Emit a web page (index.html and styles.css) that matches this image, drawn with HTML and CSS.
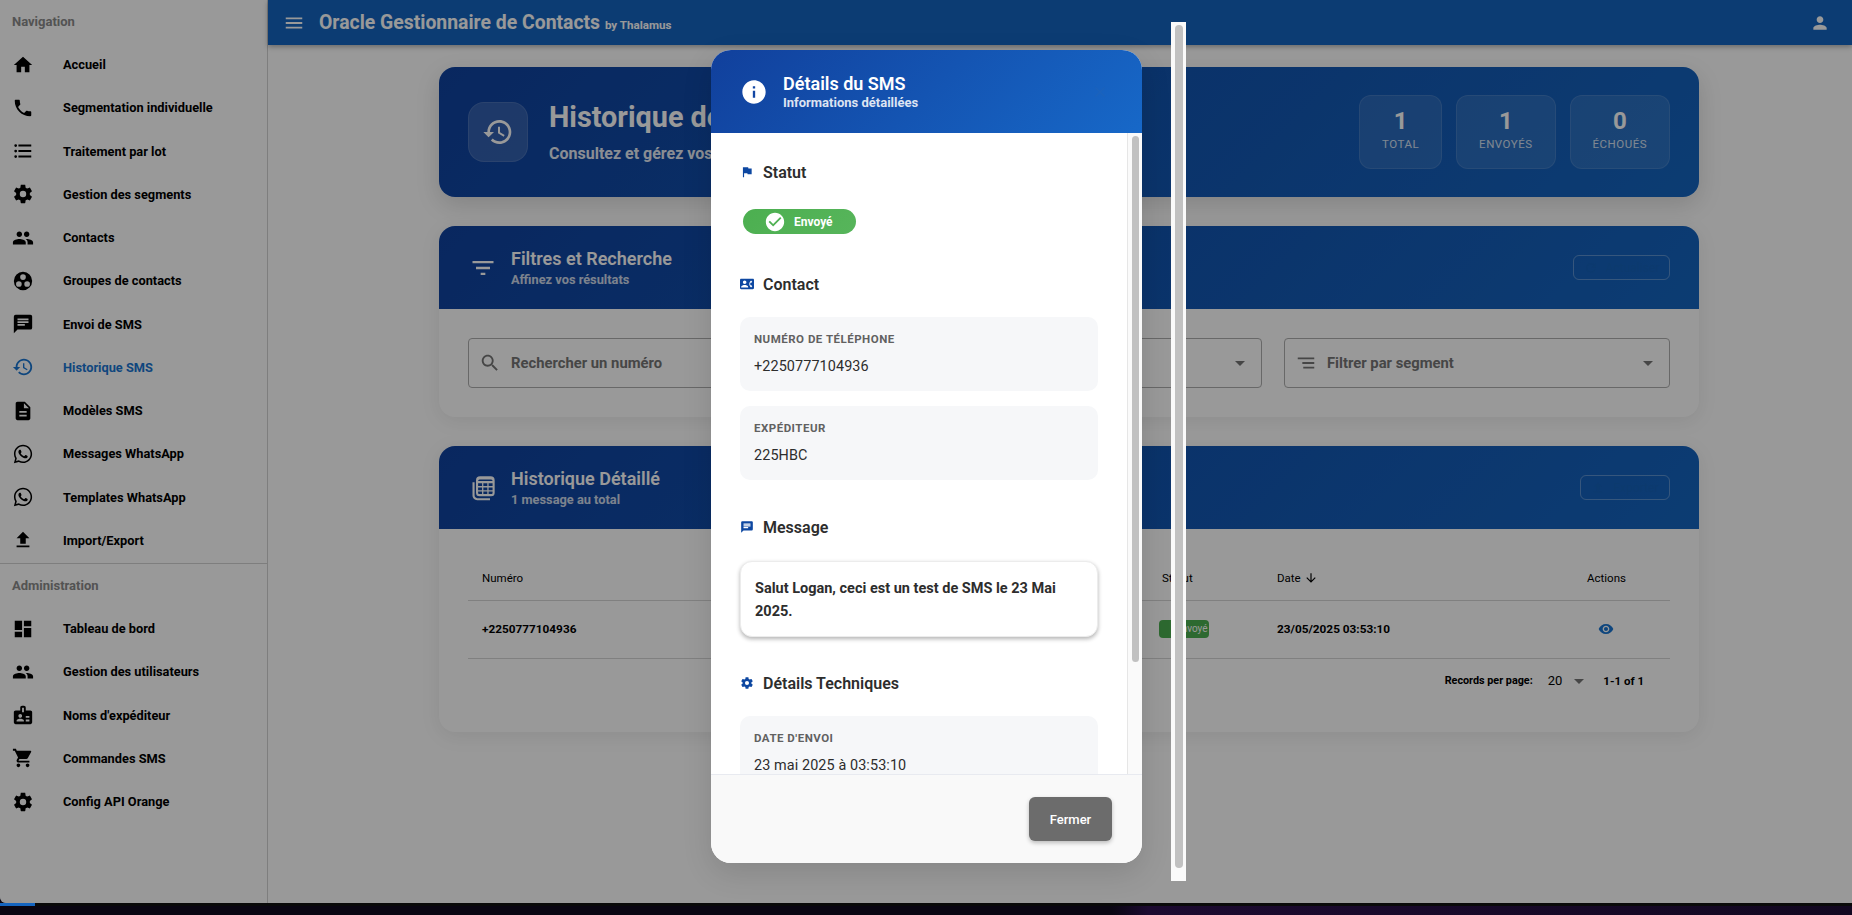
FILE: index.html
```html
<!DOCTYPE html>
<html lang="fr">
    <head>
        <meta charset="UTF-8">
        <meta name="viewport" content="width=device-width, initial-scale=1.0">
        <title>Historique SMS</title>
        <link rel="stylesheet" href="styles.css">
    </head>

    <body>
        <!-- Icon set, used with <use> everywhere below -->
        <svg class="icon-defs" xmlns="http://www.w3.org/2000/svg">
            <symbol id="i-home" viewBox="0 0 24 24"><path d="M10 20v-6h4v6h5v-8h3L12 3 2 12h3v8z"/></symbol>
            <symbol id="i-phone" viewBox="0 0 24 24"><path d="M6.62 10.79c1.44 2.83 3.76 5.14 6.59 6.59l2.2-2.2c.27-.27.67-.36 1.02-.24 1.12.37 2.33.57 3.57.57.55 0 1 .45 1 1V20c0 .55-.45 1-1 1-9.39 0-17-7.61-17-17 0-.55.45-1 1-1h3.5c.55 0 1 .45 1 1 0 1.25.2 2.45.57 3.57.11.35.03.74-.25 1.02l-2.2 2.2z"/></symbol>
            <symbol id="i-list" viewBox="0 0 24 24"><path d="M7,5H21V7H7V5M7,13V11H21V13H7M4,4.5A1.5,1.5 0 0,1 5.5,6A1.5,1.5 0 0,1 4,7.5A1.5,1.5 0 0,1 2.5,6A1.5,1.5 0 0,1 4,4.5M4,10.5A1.5,1.5 0 0,1 5.5,12A1.5,1.5 0 0,1 4,13.5A1.5,1.5 0 0,1 2.5,12A1.5,1.5 0 0,1 4,10.5M7,19V17H21V19H7M4,16.5A1.5,1.5 0 0,1 5.5,18A1.5,1.5 0 0,1 4,19.5A1.5,1.5 0 0,1 2.5,18A1.5,1.5 0 0,1 4,16.5Z"/></symbol>
            <symbol id="i-cog" viewBox="0 0 24 24"><path d="M12,15.5A3.5,3.5 0 0,1 8.5,12A3.5,3.5 0 0,1 12,8.5A3.5,3.5 0 0,1 15.5,12A3.5,3.5 0 0,1 12,15.5M19.43,12.97C19.47,12.65 19.5,12.33 19.5,12C19.5,11.67 19.47,11.34 19.43,11L21.54,9.37C21.73,9.22 21.78,8.95 21.66,8.73L19.66,5.27C19.54,5.05 19.27,4.96 19.05,5.05L16.56,6.05C16.04,5.66 15.5,5.32 14.87,5.07L14.5,2.42C14.46,2.18 14.25,2 14,2H10C9.75,2 9.54,2.18 9.5,2.42L9.13,5.07C8.5,5.32 7.96,5.66 7.44,6.05L4.95,5.05C4.73,4.96 4.46,5.05 4.34,5.27L2.34,8.73C2.21,8.95 2.27,9.22 2.46,9.37L4.57,11C4.53,11.34 4.5,11.67 4.5,12C4.5,12.33 4.53,12.65 4.57,12.97L2.46,14.63C2.27,14.78 2.21,15.05 2.34,15.27L4.34,18.73C4.46,18.95 4.73,19.03 4.95,18.95L7.44,17.94C7.96,18.34 8.5,18.68 9.13,18.93L9.5,21.58C9.54,21.82 9.75,22 10,22H14C14.25,22 14.46,21.82 14.5,21.58L14.87,18.93C15.5,18.67 16.04,18.34 16.56,17.94L19.05,18.95C19.27,19.03 19.54,18.95 19.66,18.73L21.66,15.27C21.78,15.05 21.73,14.78 21.54,14.63L19.43,12.97Z"/></symbol>
            <symbol id="i-people" viewBox="0 0 24 24"><path d="M16 11c1.66 0 2.99-1.34 2.99-3S17.66 5 16 5c-1.66 0-3 1.34-3 3s1.34 3 3 3zm-8 0c1.66 0 2.99-1.34 2.99-3S9.66 5 8 5C6.34 5 5 6.34 5 8s1.34 3 3 3zm0 2c-2.33 0-7 1.17-7 3.5V19h14v-2.5c0-2.33-4.67-3.5-7-3.5zm8 0c-.29 0-.62.02-.97.05 1.16.84 1.97 1.97 1.97 3.45V19h6v-2.5c0-2.33-4.67-3.5-7-3.5z"/></symbol>
            <symbol id="i-groups" viewBox="0 0 24 24"><path fill-rule="evenodd" d="M12 2a10 10 0 1 0 0 20 10 10 0 0 0 0-20zM12 4.6a3.1 3.1 0 1 1 0 6.2 3.1 3.1 0 0 1 0-6.2zM7.5 12.2a3.1 3.1 0 1 1 0 6.2 3.1 3.1 0 0 1 0-6.2zM16.5 12.2a3.1 3.1 0 1 1 0 6.2 3.1 3.1 0 0 1 0-6.2z"/></symbol>
            <symbol id="i-chat" viewBox="0 0 24 24"><path d="M20,2H4A2,2 0 0,0 2,4V22L6,18H20A2,2 0 0,0 22,16V4C22,2.89 21.1,2 20,2M6,9H18V11H6M14,14H6V12H14M18,8H6V6H18"/></symbol>
            <symbol id="i-history" viewBox="0 0 24 24"><path d="M13 3c-4.97 0-9 4.03-9 9H1l3.89 3.89.07.14L9 12H6c0-3.87 3.13-7 7-7s7 3.13 7 7-3.13 7-7 7c-1.93 0-3.68-.79-4.94-2.06l-1.42 1.42C8.27 19.99 10.51 21 13 21c4.97 0 9-4.03 9-9s-4.03-9-9-9zm-1 5v5l4.28 2.54.72-1.21-3.5-2.08V8H12z"/></symbol>
            <symbol id="i-doc" viewBox="0 0 24 24"><path d="M14 2H6c-1.1 0-1.99.9-1.99 2L4 20c0 1.1.89 2 1.99 2H18c1.1 0 2-.9 2-2V8l-6-6zm2 16H8v-2h8v2zm0-4H8v-2h8v2zm-3-5V3.5L18.5 9H13z"/></symbol>
            <symbol id="i-whatsapp" viewBox="0 0 24 24"><path d="M12.04 2C6.58 2 2.13 6.45 2.13 11.91C2.13 13.66 2.59 15.36 3.45 16.86L2.05 22L7.3 20.62C8.75 21.41 10.38 21.83 12.04 21.83C17.5 21.83 21.95 17.38 21.95 11.92C21.95 9.27 20.92 6.78 19.05 4.91C17.18 3.03 14.69 2 12.04 2M12.05 3.67C14.25 3.67 16.31 4.53 17.87 6.09C19.42 7.65 20.28 9.72 20.28 11.92C20.28 16.46 16.58 20.15 12.04 20.15C10.56 20.15 9.11 19.76 7.85 19L7.55 18.83L4.43 19.65L5.26 16.61L5.06 16.29C4.24 15 3.8 13.47 3.8 11.91C3.81 7.37 7.5 3.67 12.05 3.67M8.53 7.33C8.37 7.33 8.1 7.39 7.87 7.64C7.65 7.89 7 8.5 7 9.71C7 10.93 7.89 12.1 8 12.27C8.14 12.44 9.76 14.94 12.25 16C12.84 16.27 13.3 16.42 13.66 16.53C14.25 16.72 14.79 16.69 15.22 16.63C15.7 16.56 16.68 16.03 16.89 15.45C17.1 14.87 17.1 14.38 17.04 14.27C16.97 14.17 16.81 14.11 16.56 14C16.31 13.86 15.09 13.26 14.87 13.18C14.64 13.1 14.5 13.06 14.31 13.3C14.15 13.55 13.67 14.11 13.53 14.27C13.38 14.44 13.24 14.46 13 14.34C12.74 14.21 11.94 13.95 11 13.11C10.26 12.45 9.77 11.64 9.62 11.39C9.5 11.15 9.61 11 9.73 10.89C9.84 10.78 10 10.6 10.1 10.45C10.23 10.31 10.27 10.2 10.35 10.04C10.43 9.87 10.39 9.73 10.33 9.61C10.27 9.5 9.77 8.26 9.56 7.77C9.36 7.29 9.16 7.35 9 7.34C8.86 7.34 8.7 7.33 8.53 7.33Z"/></symbol>
            <symbol id="i-upload" viewBox="0 0 24 24"><path d="M9 16h6v-6h4l-7-7-7 7h4zm-4 2h14v2H5z"/></symbol>
            <symbol id="i-dashboard" viewBox="0 0 24 24"><path d="M3 13h8V3H3v10zm0 8h8v-6H3v6zm10 0h8V11h-8v10zm0-18v6h8V3h-8z"/></symbol>
            <symbol id="i-badge" viewBox="0 0 24 24"><path d="M20 7H15V4C15 2.9 14.1 2 13 2H11C9.9 2 9 2.9 9 4V7H4C2.9 7 2 7.9 2 9V20C2 21.1 2.9 22 4 22H20C21.1 22 22 21.1 22 20V9C22 7.9 21.1 7 20 7M11 4H13V9H11V4M9 11C10.1 11 11 11.9 11 13S10.1 15 9 15 7 14.1 7 13 7.9 11 9 11M13 19H5V18C5 16.67 7.67 16 9 16S13 16.67 13 18V19M19 19H15V17H19V19M19 15H15V13H19V15Z"/></symbol>
            <symbol id="i-cart" viewBox="0 0 24 24"><path d="M17 18c-1.1 0-1.99.9-1.99 2s.89 2 1.99 2 2-.9 2-2-.9-2-2-2zM1 2v2h2l3.6 7.59-1.35 2.45c-.16.28-.25.61-.25.96 0 1.1.9 2 2 2h12v-2H7.42c-.14 0-.25-.11-.25-.25l.03-.12.9-1.63h7.45c.75 0 1.41-.41 1.75-1.03l3.58-6.49c.08-.14.12-.31.12-.48 0-.55-.45-1-1-1H5.21l-.94-2H1zm6 16c-1.1 0-1.99.9-1.99 2s.89 2 1.99 2 2-.9 2-2-.9-2-2-2z"/></symbol>
            <symbol id="i-menu" viewBox="0 0 24 24"><path d="M3 18h18v-2H3v2zm0-5h18v-2H3v2zm0-7v2h18V6H3z"/></symbol>
            <symbol id="i-account" viewBox="0 0 24 24"><path d="M12 12c2.21 0 4-1.79 4-4s-1.79-4-4-4-4 1.79-4 4 1.79 4 4 4zm0 2c-2.67 0-8 1.34-8 4v2h16v-2c0-2.66-5.33-4-8-4z"/></symbol>
            <symbol id="i-info" viewBox="0 0 24 24"><path d="M12 2C6.48 2 2 6.48 2 12s4.48 10 10 10 10-4.48 10-10S17.52 2 12 2zm1 15h-2v-6h2v6zm0-8h-2V7h2v2z"/></symbol>
            <symbol id="i-flag" viewBox="0 0 24 24"><path d="M14.4 6L14 4H5v17h2v-7h5.6l.4 2h7V6z"/></symbol>
            <symbol id="i-contact" viewBox="0 0 24 24"><path d="M22 3H2C.9 3 0 3.9 0 5v14c0 1.1.9 2 2 2h20c1.1 0 1.99-.9 1.99-2L24 5c0-1.1-.9-2-2-2zM8 6c1.66 0 3 1.34 3 3s-1.34 3-3 3-3-1.34-3-3 1.34-3 3-3zm6 12H2v-1c0-2 4-3.1 6-3.1s6 1.1 6 3.1v1zm3.85-4h1.64L21 16l-1.99 1.99c-1.31-.98-2.28-2.38-2.73-3.99-.18-.64-.28-1.31-.28-2s.1-1.36.28-2c.45-1.62 1.42-3.01 2.73-3.99L21 8l-1.51 2h-1.64c-.22.63-.35 1.3-.35 2s.13 1.37.35 2z"/></symbol>
            <symbol id="i-filter" viewBox="0 0 24 24"><path d="M6,13H18V11H6M3,6V8H21V6M10,18H14V16H10V18Z"/></symbol>
            <symbol id="i-segment" viewBox="0 0 24 24"><path d="M3 6h18v2H3zM8 11h13v2H8zM9 16h12v2H9z"/></symbol>
            <symbol id="i-table" viewBox="0 0 24 24"><path fill-rule="evenodd" d="M3 7h1.800v11.500c0 1.200 1 2.200 2.200 2.200h11V22.500H7c-2.200 0-4-1.800-4-4zM9.500 2H18.500A3.500 3.500 0 0 1 22 5.500V16a3 3 0 0 1-3 3H9a3 3 0 0 1-3-3V5.500A3.500 3.500 0 0 1 9.500 2zM9 4.800a1.300 1.300 0 0 0-1.200 1.200h12.400a1.300 1.300 0 0 0-1.200-1.200zM7.800 8v2.300h3.400V8zM12.300 8v2.300h3.400V8zM16.800 8v2.300h3.400V8zM7.800 11.600v2.300h3.400v-2.300zM12.300 11.600v2.300h3.400v-2.300zM16.800 11.600v2.300h3.400v-2.300zM7.800 15v1.200c0 .6.500 1 1 1h2.400V15zM12.300 15v2.200h3.400V15zM16.800 15v2.200h2.400c.5 0 1-.4 1-1V15z"/></symbol>
            <symbol id="i-check" viewBox="0 0 24 24"><path d="M12 2C6.48 2 2 6.48 2 12s4.48 10 10 10 10-4.48 10-10S17.52 2 12 2zm-2 15l-5-5 1.41-1.41L10 14.17l7.59-7.59L19 8l-9 9z"/></symbol>
            <symbol id="i-eye" viewBox="0 0 24 24"><path d="M12 4.500C7 4.500 2.730 7.610 1 12c1.730 4.390 6 7.500 11 7.500s9.270-3.110 11-7.500c-1.730-4.390-6-7.500-11-7.500zM12 17c-2.760 0-5-2.240-5-5s2.240-5 5-5 5 2.240 5 5-2.240 5-5 5zm0-8c-1.660 0-3 1.340-3 3s1.340 3 3 3 3-1.340 3-3-1.340-3-3-3z"/></symbol>
            <symbol id="i-search" viewBox="0 0 24 24"><path d="M15.500 14h-.790l-.280-.270C15.410 12.590 16 11.110 16 9.500 16 5.910 13.090 3 9.500 3S3 5.910 3 9.500 5.910 16 9.500 16c1.610 0 3.090-.590 4.230-1.570l.270.280v.790l5 4.990L20.490 19l-4.990-5zm-6 0C7.010 14 5 11.990 5 9.500S7.010 5 9.500 5 14 7.010 14 9.500 11.990 14 9.500 14z"/></symbol>
            <symbol id="i-down" viewBox="0 0 24 24"><path d="M20 12l-1.410-1.410L13 16.170V4h-2v12.170l-5.580-5.590L4 12l8 8 8-8z"/></symbol>
            <symbol id="i-drop" viewBox="0 0 24 24"><path d="M7 10l5 5 5-5z"/></symbol>
            <symbol id="i-close" viewBox="0 0 24 24"><path d="M19 6.410L17.590 5 12 10.590 6.410 5 5 6.410 10.590 12 5 17.590 6.410 19 12 13.410 17.590 19 19 17.590 13.410 12z"/></symbol>
            <symbol id="i-refresh" viewBox="0 0 24 24"><path d="M17.650 6.350A7.950 7.950 0 0 0 12 4a8 8 0 1 0 7.730 10h-2.080A6 6 0 1 1 12 6c1.660 0 3.140.690 4.220 1.780L13 11h7V4z"/></symbol>
        </svg>

        <div class="window">
            <aside class="sidebar">
                <div class="nav-section">
                    <div class="nav-title">Navigation</div>
                    <a class="nav-item"><svg class="nav-icon"><use href="#i-home"/></svg>Accueil</a>
                    <a class="nav-item"><svg class="nav-icon"><use href="#i-phone"/></svg>Segmentation individuelle</a>
                    <a class="nav-item"><svg class="nav-icon"><use href="#i-list"/></svg>Traitement par lot</a>
                    <a class="nav-item"><svg class="nav-icon"><use href="#i-cog"/></svg>Gestion des segments</a>
                    <a class="nav-item"><svg class="nav-icon"><use href="#i-people"/></svg>Contacts</a>
                    <a class="nav-item"><svg class="nav-icon"><use href="#i-groups"/></svg>Groupes de contacts</a>
                    <a class="nav-item"><svg class="nav-icon"><use href="#i-chat"/></svg>Envoi de SMS</a>
                    <a class="nav-item active"><svg class="nav-icon"><use href="#i-history"/></svg>Historique SMS</a>
                    <a class="nav-item"><svg class="nav-icon"><use href="#i-doc"/></svg>Modèles SMS</a>
                    <a class="nav-item"><svg class="nav-icon"><use href="#i-whatsapp"/></svg>Messages WhatsApp</a>
                    <a class="nav-item"><svg class="nav-icon"><use href="#i-whatsapp"/></svg>Templates WhatsApp</a>
                    <a class="nav-item"><svg class="nav-icon"><use href="#i-upload"/></svg>Import/Export</a>
                </div>
                <div class="nav-section admin">
                    <div class="nav-title">Administration</div>
                    <a class="nav-item"><svg class="nav-icon"><use href="#i-dashboard"/></svg>Tableau de bord</a>
                    <a class="nav-item"><svg class="nav-icon"><use href="#i-people"/></svg>Gestion des utilisateurs</a>
                    <a class="nav-item"><svg class="nav-icon"><use href="#i-badge"/></svg>Noms d'expéditeur</a>
                    <a class="nav-item"><svg class="nav-icon"><use href="#i-cart"/></svg>Commandes SMS</a>
                    <a class="nav-item"><svg class="nav-icon"><use href="#i-cog"/></svg>Config API Orange</a>
                </div>
            </aside>

            <div class="app">
                <header class="topbar">
                    <svg class="topbar-icon"><use href="#i-menu"/></svg>
                    <div class="brand">Oracle Gestionnaire de Contacts <small>by Thalamus</small></div>
                    <svg class="topbar-user"><use href="#i-account"/></svg>
                </header>

                <main class="content">
                    <section class="hero">
                        <div class="hero-icon"><svg><use href="#i-history"/></svg></div>
                        <div class="hero-text">
                            <h1>Historique des SMS</h1>
                            <p>Consultez et gérez vos messages envoyés</p>
                        </div>
                        <div class="stats">
                            <div class="stat"><b>1</b><span>Total</span></div>
                            <div class="stat"><b>1</b><span>Envoyés</span></div>
                            <div class="stat"><b>0</b><span>Échoués</span></div>
                        </div>
                    </section>

                    <section class="card">
                        <div class="card-head">
                            <svg class="card-icon"><use href="#i-filter"/></svg>
                            <div class="card-title">
                                <h2>Filtres et Recherche</h2>
                                <p>Affinez vos résultats</p>
                            </div>
                            <button class="ghost-btn"><svg><use href="#i-refresh"/></svg>Actualiser</button>
                        </div>
                        <div class="filters">
                            <div class="field"><svg class="field-icon"><use href="#i-search"/></svg><span>Rechercher un numéro</span></div>
                            <div class="field"><svg class="field-icon"><use href="#i-flag"/></svg><span>Filtrer par statut</span><svg class="field-drop"><use href="#i-drop"/></svg></div>
                            <div class="field"><svg class="field-icon"><use href="#i-segment"/></svg><span>Filtrer par segment</span><svg class="field-drop"><use href="#i-drop"/></svg></div>
                        </div>
                    </section>

                    <section class="card">
                        <div class="card-head">
                            <svg class="card-icon"><use href="#i-table"/></svg>
                            <div class="card-title">
                                <h2>Historique Détaillé</h2>
                                <p>1 message au total</p>
                            </div>
                            <button class="ghost-btn small"><svg><use href="#i-upload"/></svg>Exporter</button>
                        </div>
                        <div class="table-wrap">
                            <table class="history">
                                <thead>
                                    <tr>
                                        <th>Numéro</th>
                                        <th>Message</th>
                                        <th>Statut</th>
                                        <th>Date <svg class="sort"><use href="#i-down"/></svg></th>
                                        <th class="center">Actions</th>
                                    </tr>
                                </thead>
                                <tbody>
                                    <tr>
                                        <td>+2250777104936</td>
                                        <td>Salut Logan, ceci est un test de SMS le 23 Mai 2025.</td>
                                        <td><span class="mini-chip">Envoyé</span></td>
                                        <td>23/05/2025 03:53:10</td>
                                        <td class="center"><svg class="eye"><use href="#i-eye"/></svg></td>
                                    </tr>
                                </tbody>
                            </table>
                            <div class="pager">
                                <span class="per-label">Records per page:</span>
                                <span class="per-page">20</span>
                                <svg class="pager-drop"><use href="#i-drop"/></svg>
                                <span class="range">1-1 of 1</span>
                            </div>
                        </div>
                    </section>
                </main>
            </div>

            <div class="scrim"></div>

            <div class="dialog">
                <div class="dialog-head">
                    <svg class="dialog-info"><use href="#i-info"/></svg>
                    <div class="dialog-title">
                        <h3>Détails du SMS</h3>
                        <p>Informations détaillées</p>
                    </div>
                    <svg class="dialog-close"><use href="#i-close"/></svg>
                </div>
                <div class="dialog-body">
                    <div class="dialog-scroll">
                        <h4 class="sec"><svg class="sec-flag"><use href="#i-flag"/></svg>Statut</h4>
                        <div class="chip"><svg><use href="#i-check"/></svg>Envoyé</div>
                        <h4 class="sec sec-contact"><svg><use href="#i-contact"/></svg>Contact</h4>
                        <div class="info-box">
                            <label>Numéro de téléphone</label>
                            <div>+2250777104936</div>
                        </div>
                        <div class="info-box">
                            <label>Expéditeur</label>
                            <div>225HBC</div>
                        </div>
                        <h4 class="sec sec-message"><svg><use href="#i-chat"/></svg>Message</h4>
                        <div class="message-box">Salut Logan, ceci est un test de SMS le 23 Mai 2025.</div>
                        <h4 class="sec sec-tech"><svg><use href="#i-cog"/></svg>Détails Techniques</h4>
                        <div class="info-box">
                            <label>Date d'envoi</label>
                            <div>23 mai 2025 à 03:53:10</div>
                        </div>
                    </div>
                    <div class="dialog-track"><div class="dialog-thumb"></div></div>
                </div>
                <div class="dialog-foot">
                    <button class="close-btn">Fermer</button>
                </div>
            </div>

            <div class="page-track"><div class="page-thumb"></div></div>
        </div>

        <div class="desktop"><div class="dock-tab"></div></div>
    </body>
</html>
```

FILE: styles.css
```css
* {
    box-sizing: border-box;
}

html, body {
    height: 100%;
}

body {
    margin: 0;
    display: flex;
    flex-direction: column;
    overflow: hidden;
    font-family: Roboto, "Liberation Sans", sans-serif;
    color: #000;
    background-color: #0a0612;
}

.icon-defs {
    display: none;
}

svg {
    fill: currentColor;
    flex: none;
}

h1, h2, h3, h4, p {
    margin: 0;
}

.window {
    position: relative;
    display: flex;
    height: 903px;
    flex: none;
    overflow: hidden;
    background-color: #fff;
    border-radius: 0 0 0 6px;
}

/* Sidebar */
.sidebar {
    width: 268px;
    flex: none;
    border-right: 1px solid #d2d2d2;
}

.nav-title {
    height: 43px;
    padding-left: 12px;
    line-height: 43px;
    font-size: 13px;
    font-weight: 700;
    color: #8a8a8a;
}

.nav-section {
    padding-bottom: 1px;
}

.nav-section.admin {
    border-top: 1px solid #d2d2d2;
}

.nav-item {
    display: flex;
    align-items: center;
    height: 43.250px;
    padding-left: 12px;
    font-size: 12.800px;
    font-weight: 700;
}

.nav-icon {
    width: 22px;
    height: 22px;
    margin-right: 29px;
}

.nav-item.active {
    color: #1976d2;
}

/* Top bar */
.app {
    flex: 1;
    min-width: 0;
}

.topbar {
    display: flex;
    align-items: center;
    height: 45px;
    padding-left: 15px;
    color: #fff;
    background-color: #1565c0;
    box-shadow: 0 2px 5px rgba(0, 0, 0, 0.3);
}

.topbar-icon {
    width: 22px;
    height: 22px;
    margin-right: 14px;
}

.brand {
    font-size: 19.400px;
    font-weight: 700;
}

.brand small {
    font-size: 11.600px;
    font-weight: 700;
}

.topbar-user {
    width: 20px;
    height: 20px;
    margin-left: auto;
    margin-right: 22px;
}

/* Main content */
.content {
    width: 1260px;
    margin-left: 171px;
    padding-top: 22px;
}

.hero {
    display: flex;
    align-items: center;
    height: 130px;
    padding: 0 29px;
    margin-bottom: 29px;
    color: #fff;
    border-radius: 16px;
    background: linear-gradient(135deg, #0f429f, #1565c0);
    box-shadow: 0 8px 24px rgba(0, 0, 0, 0.14);
}

.hero-icon {
    display: flex;
    align-items: center;
    justify-content: center;
    width: 60px;
    height: 60px;
    margin-right: 21px;
    border-radius: 16px;
    background-color: rgba(255, 255, 255, 0.15);
    border: 1px solid rgba(255, 255, 255, 0.1);
}

.hero-icon svg {
    width: 32px;
    height: 32px;
}

.hero-text {
    flex: 1;
    padding-bottom: 2px;
}

.hero-text h1 {
    font-size: 28.800px;
    font-weight: 700;
    line-height: 36px;
    margin-bottom: 8.500px;
}

.hero-text p {
    font-size: 16px;
    font-weight: 700;
    opacity: 0.9;
}

.stats {
    display: flex;
    gap: 14px;
}

.stat {
    display: flex;
    flex-direction: column;
    align-items: center;
    justify-content: center;
    height: 74px;
    padding: 0 22px 3px;
    border-radius: 12px;
    background-color: rgba(255, 255, 255, 0.1);
    border: 1px solid rgba(255, 255, 255, 0.1);
}

.stat b {
    font-size: 24px;
    font-weight: 700;
    line-height: 27px;
}

.stat span {
    font-size: 11.500px;
    line-height: 18px;
    letter-spacing: 0.500px;
    text-transform: uppercase;
    opacity: 0.8;
}

.card {
    margin-bottom: 29px;
    border-radius: 16px;
    background-color: #fff;
    box-shadow: 0 4px 20px rgba(0, 0, 0, 0.08);
    overflow: hidden;
}

.card-head {
    display: flex;
    align-items: center;
    height: 83px;
    padding: 0 29px 0 30px;
    color: #fff;
    background: linear-gradient(135deg, #0f429f, #1565c0);
}

.card-icon {
    width: 28px;
    height: 28px;
    margin-right: 14px;
}

.card-title {
    flex: 1;
    padding-top: 2px;
}

.card-title h2 {
    font-size: 18px;
    font-weight: 600;
    line-height: 22px;
}

.card-title p {
    font-size: 12.800px;
    font-weight: 700;
    line-height: 20px;
    opacity: 0.8;
}

.ghost-btn {
    display: flex;
    align-items: center;
    justify-content: center;
    gap: 8px;
    width: 97px;
    height: 25px;
    padding: 0;
    font-family: inherit;
    font-size: 12px;
    color: #1461b8;
    background: none;
    border: 1px solid rgba(255, 255, 255, 0.3);
    border-radius: 6px;
}

.ghost-btn.small {
    width: 90px;
}

.ghost-btn svg {
    width: 14px;
    height: 14px;
}

.filters {
    display: grid;
    grid-template-columns: repeat(3, 1fr);
    gap: 22px;
    padding: 29px 29px;
}

.field {
    display: flex;
    align-items: center;
    height: 50px;
    padding: 0 9px 0 10px;
    font-size: 14.800px;
    font-weight: 700;
    color: #757575;
    border: 1px solid #adadad;
    border-radius: 4px;
}

.field-icon {
    width: 22px;
    height: 22px;
    margin-right: 10px;
}

.field-drop {
    width: 24px;
    height: 24px;
    margin-left: auto;
}

.table-wrap {
    height: 203px;
    padding: 28px 29px 0;
}

.history {
    width: 100%;
    border-collapse: collapse;
    table-layout: fixed;
    font-size: 11.800px;
}

.history th {
    height: 43px;
    padding: 0 14px;
    font-size: 11.500px;
    font-weight: 400;
    text-align: left;
    border-bottom: 1px solid #d6d6d6;
}

.history td {
    height: 58px;
    padding: 0 14px;
    font-weight: 700;
    border-bottom: 1px solid #d6d6d6;
}

.history th:nth-child(1) {
    width: 240px;
}

.history th:nth-child(3) {
    width: 115px;
}

.history th:nth-child(4) {
    width: 280px;
}

.history th:nth-child(5) {
    width: 127px;
}

.history td:nth-child(2) {
    white-space: nowrap;
    overflow: hidden;
}

.history .center {
    text-align: center;
}

.sort {
    width: 14px;
    height: 14px;
    vertical-align: -3px;
}

.mini-chip {
    display: inline-block;
    width: 50px;
    height: 18px;
    margin-left: -3px;
    line-height: 18px;
    padding-left: 17px;
    font-size: 10px;
    font-weight: 400;
    color: #fff;
    border-radius: 4px;
    background-color: #4caf50;
}

.eye {
    width: 16px;
    height: 16px;
    margin-right: 2px;
    color: #1976d2;
    vertical-align: middle;
}

.pager {
    display: flex;
    align-items: center;
    justify-content: flex-end;
    height: 44px;
    padding-right: 26px;
    font-size: 11.500px;
    font-weight: 700;
}

.per-label {
    font-size: 10.800px;
}

.per-page {
    margin-left: 15px;
    font-size: 13px;
    font-weight: 400;
}

.pager-drop {
    width: 24px;
    height: 24px;
    margin-left: 5px;
    color: #757575;
}

.range {
    margin-left: 12px;
}

/* Overlay */
.scrim {
    position: absolute;
    inset: 0;
    background-color: rgba(0, 0, 0, 0.4);
}

.dialog {
    position: absolute;
    left: 711px;
    top: 50px;
    display: flex;
    flex-direction: column;
    width: 431px;
    height: 813px;
    overflow: hidden;
    color: #2d2d2d;
    background-color: #fff;
    border-radius: 20px;
    box-shadow: 0 10px 30px rgba(0, 0, 0, 0.12);
}

.dialog-head {
    display: flex;
    align-items: center;
    flex: none;
    height: 83px;
    padding: 0 33px 0 29px;
    color: #fff;
    background: linear-gradient(135deg, #11409c, #1768c8);
}

.dialog-info {
    width: 28px;
    height: 28px;
    margin-right: 15px;
}

.dialog-title {
    flex: 1;
}

.dialog-title h3 {
    font-size: 18px;
    font-weight: 600;
    line-height: 23px;
}

.dialog-title p {
    font-size: 13px;
    font-weight: 700;
    line-height: 16px;
    opacity: 0.85;
}

.dialog-close {
    width: 18px;
    height: 18px;
    color: #1b62bc;
}

.dialog-body {
    display: flex;
    flex: 1;
    min-height: 0;
}

.dialog-scroll {
    flex: 1;
    min-width: 0;
    padding: 26px 29px 0;
    overflow: hidden;
}

.dialog-track {
    width: 15px;
    flex: none;
    padding: 3px 3px 0 4px;
    background-color: #fafafa;
    border-left: 1px solid #e6e6e6;
}

.dialog-thumb {
    height: 526px;
    border-radius: 4px;
    background-color: #c1c1c1;
}

.sec {
    display: flex;
    align-items: center;
    height: 26px;
    font-size: 16px;
    font-weight: 600;
}

.sec svg {
    width: 14px;
    height: 14px;
    margin-right: 9px;
    color: #0d47a1;
}

.chip {
    display: flex;
    align-items: center;
    width: 113px;
    height: 25px;
    margin: 24px 0 37px 3px;
    padding-left: 21px;
    font-size: 12px;
    font-weight: 700;
    color: #fff;
    border-radius: 13px;
    background: linear-gradient(135deg, #4caf50, #57b55b);
}

.chip svg {
    width: 22px;
    height: 22px;
    margin-right: 8px;
}

.info-box {
    height: 74px;
    margin-bottom: 15px;
    padding: 15px 14px 0;
    font-size: 14.400px;
    letter-spacing: 0.100px;
    border-radius: 10px;
    background-color: #f6f7f9;
}

.info-box label {
    display: block;
    margin-bottom: 11.500px;
    font-size: 11.500px;
    font-weight: 700;
    letter-spacing: 0.500px;
    color: #616161;
    text-transform: uppercase;
}

.sec-contact {
    margin-bottom: 20px;
}

.sec-message {
    margin: 34px 0 21px;
}

.sec-tech {
    margin: 33px 0 20px;
}

.message-box {
    height: 76px;
    padding: 14.500px 14px 0;
    font-size: 14.500px;
    font-weight: 700;
    line-height: 23px;
    border-radius: 12px;
    background-color: #fff;
    border: 1px solid #ececec;
    box-shadow: 0 2px 4px rgba(0, 0, 0, 0.3);
}

.dialog-foot {
    display: flex;
    flex: none;
    justify-content: flex-end;
    height: 89px;
    padding: 22px 30px 0 0;
    background-color: #f9f9f9;
    border-top: 1px solid #e8eaf0;
}

.close-btn {
    width: 83px;
    height: 44px;
    font-family: inherit;
    font-size: 13px;
    font-weight: 500;
    color: #fff;
    background-color: #6c6c6c;
    border: none;
    border-radius: 6px;
    box-shadow: 0 2px 4px rgba(0, 0, 0, 0.25);
}

.page-track {
    position: absolute;
    left: 1171px;
    top: 22px;
    width: 15px;
    height: 859px;
    padding: 3px 3px 0 4px;
    background-color: #fafafa;
}

.page-thumb {
    height: 843px;
    border-radius: 4px;
    background-color: #c1c1c1;
}

/* Desktop strip below the browser window */
.desktop {
    position: relative;
    flex: 1;
    background: linear-gradient(90deg, #0a0612 60%, #1c0a30 62%, #120720);
    border-top: 3px solid #0a0a0a;
}

.dock-tab {
    position: absolute;
    left: 0;
    top: -3px;
    width: 35px;
    height: 3px;
    background-color: #1565c0;
}
```
